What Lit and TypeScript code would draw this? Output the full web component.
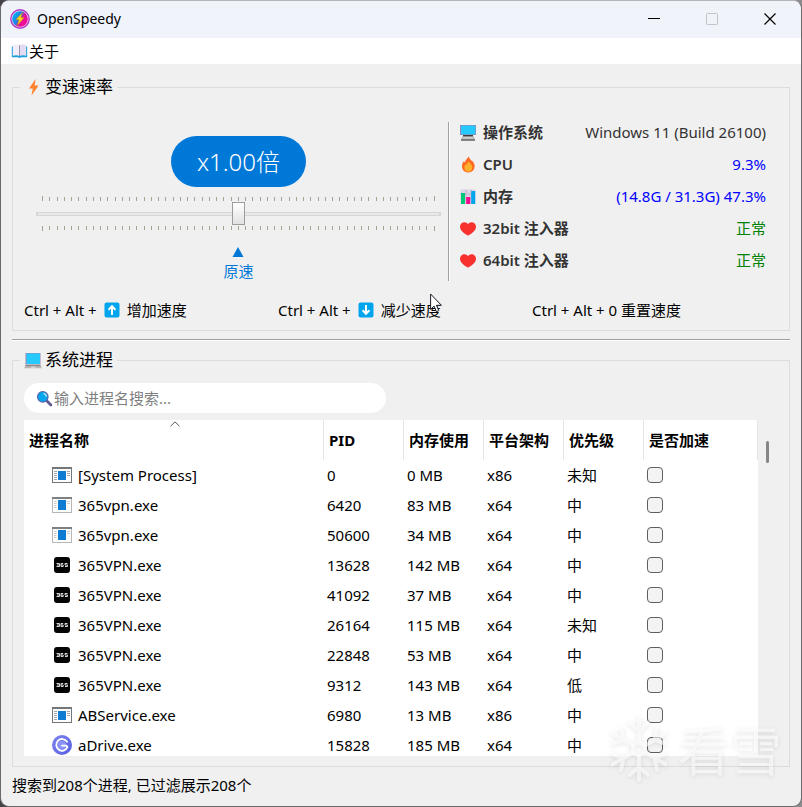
import { LitElement, html, css, svg, nothing } from "lit";
import { customElement, state } from "lit/decorators.js";

type IconKind = "system" | "user" | "vpn" | "drive";

interface Proc {
  icon: IconKind;
  name: string;
  pid: number;
  mem: string;
  arch: string;
  priority: string;
}

const PROCS: Proc[] = [
  { icon: "system", name: "[System Process]", pid: 0, mem: "0 MB", arch: "x86", priority: "未知" },
  { icon: "user", name: "365vpn.exe", pid: 6420, mem: "83 MB", arch: "x64", priority: "中" },
  { icon: "user", name: "365vpn.exe", pid: 50600, mem: "34 MB", arch: "x64", priority: "中" },
  { icon: "vpn", name: "365VPN.exe", pid: 13628, mem: "142 MB", arch: "x64", priority: "中" },
  { icon: "vpn", name: "365VPN.exe", pid: 41092, mem: "37 MB", arch: "x64", priority: "中" },
  { icon: "vpn", name: "365VPN.exe", pid: 26164, mem: "115 MB", arch: "x64", priority: "未知" },
  { icon: "vpn", name: "365VPN.exe", pid: 22848, mem: "53 MB", arch: "x64", priority: "中" },
  { icon: "vpn", name: "365VPN.exe", pid: 9312, mem: "143 MB", arch: "x64", priority: "低" },
  { icon: "system", name: "ABService.exe", pid: 6980, mem: "13 MB", arch: "x86", priority: "中" },
  { icon: "drive", name: "aDrive.exe", pid: 15828, mem: "185 MB", arch: "x64", priority: "中" },
];

const COLUMNS = ["进程名称", "PID", "内存使用", "平台架构", "优先级", "是否加速"];

const icon = (w: number, h: number, body: unknown) =>
  html`<svg width=${w} height=${h} viewBox="0 0 ${w} ${h}" aria-hidden="true">${body}</svg>`;

const appLogo = icon(20, 20, svg`
  <defs><linearGradient id="lg" x1="0" y1="0.2" x2="1" y2="0.8">
    <stop offset="0" stop-color="#00b4f5"/><stop offset="0.42" stop-color="#1a86e8"/>
    <stop offset="0.58" stop-color="#e0109c"/><stop offset="1" stop-color="#ff0a8c"/>
  </linearGradient></defs>
  <circle cx="10" cy="10" r="9.2" fill="#f3c8f0" stroke="#b03cc8" stroke-width="1.4"/>
  <circle cx="10" cy="10" r="7.8" fill="url(#lg)"/>
  <path d="M12.6 3.2 5.800 10.8h3.200L7 17l7.200-8.600h-3.300z" fill="#ffd21a" stroke="#b86a20" stroke-width=".4"/>`);

const bookIcon = icon(17, 16, svg`
  <path d="M.8 3.4h15.4v10.8H9.8l-1.3 1.1-1.3-1.1H.8z" fill="#1c9fdc"/>
  <path d="M1.8 2.2C4 .9 6.600.9 8.500 2.300v10.800c-2-1.200-4.600-1.200-6.700-.3z" fill="#f2eef9"/>
  <path d="M15.200 2.200C13 .9 10.400.9 8.500 2.300v10.800c2-1.200 4.600-1.200 6.700-.3z" fill="#e3dcf0"/>
  <path d="M8.500 2.300v11" stroke="#9a8fae" stroke-width="1"/>`);

const boltIcon = icon(18, 18, svg`<path d="M11.600 1 5 10.400h3.800L7.500 17.600l7.200-10h-4z" fill="#ff822d"/>`);

const laptopIcon = icon(18, 18, svg`
  <rect x="1.500" y="2" width="15" height="11.500" fill="#9a86b8"/>
  <rect x="2.500" y="2.500" width="13.500" height="10.500" fill="#26c9fc"/>
  <path d="M1.500 13.500h15l1.200 3.800H.3z" fill="#b9b6b4"/>
  <path d="M1.800 14h14.400l.4 1.200H1.400z" fill="#8e8a8c"/><path d="M7 15.600h4.500v1H7z" fill="#e6e6e6"/>`);

const desktopIcon = icon(18, 17, svg`
  <rect x="1" y="1" width="16" height="10" fill="#9a86b8"/>
  <rect x="2" y="1.600" width="14.400" height="8.800" fill="#26c9fc"/>
  <path d="M4 11h10v1.800H4z" fill="#3b3b3b"/><path d="M3.200 12.600h11.600l1.400 3.800H1.800z" fill="#b5b2b2"/>
  <path d="M4.400 13.300h9.200l.5 1.200H3.900z" fill="#d8d8d8"/><path d="M2 15.600h14v1H2z" fill="#3f3c3e"/>`);

const fireIcon = icon(18, 17, svg`
  <path d="M9.800.6c.5 2 1.400 2.700 2.400 3.900 1.600.5 3.600 3 3.400 6-.2 3.600-2.600 5.900-6.200 5.900s-6.300-2.300-6.400-6c0-2.500.8-4 1.900-5.200l1 1.400C6.700 3.600 8.200 2.600 9.800.6z" fill="#ff6a22"/>
  <path d="M9.400 5.800c1.800 1.500 3.900 3 3.900 6 0 2.300-1.600 4-3.900 4s-4-1.700-4-4c0-1.600.6-2.700 1.300-3.500l.9.800c.3-1.300.9-2.300 1.800-3.300z" fill="#ffb02e"/>`);

const chartIcon = icon(18, 17, svg`
  <rect x="1.500" y="1.500" width="15" height="14.500" rx="1" fill="#dcd3e6"/>
  <path d="M1.500 6h15M1.500 10.500h15M7 1.500v14M12 1.500v14" stroke="#b7aec6" stroke-width=".8"/>
  <rect x="2" y="5" width="4" height="11" fill="#00c878"/>
  <rect x="7.200" y="9" width="4" height="7" fill="#f70a8d"/>
  <rect x="12.200" y="3" width="4" height="13" fill="#00a6ed"/>`);

const heartIcon = icon(18, 17, svg`
  <path d="M5.500 2.200c1.700 0 2.900.8 3.500 2 .6-1.200 1.800-2 3.500-2 2.500 0 4.500 1.800 4.500 4.600 0 4-4.300 6.600-8 9-3.700-2.400-8-5-8-9C1 4 3 2.200 5.500 2.200z" fill="#f8312f"/>`);

const searchIcon = icon(17, 17, svg`
  <path d="M10.500 10.500l4.400 4.400" stroke="#635994" stroke-width="2.800" stroke-linecap="round"/>
  <circle cx="6.800" cy="6.800" r="5.300" fill="#00a6ed" stroke="#5a5fa8" stroke-width="1.100"/>
  <path d="M8 3.600q2 .6 2.300 2.600" stroke="#cdeefd" stroke-width="1.300" fill="none" stroke-linecap="round"/>`);

const keyIcon = (down: boolean) => icon(16, 16, svg`
  <rect x=".5" y=".5" width="15" height="15" rx="2" fill="#00a6ed"/>
  <path d=${down ? "M8 3v8M4.600 8.300 8 11.800l3.400-3.500" : "M8 13V5M4.600 7.700 8 4.200l3.400 3.500"}
    stroke="#fff" stroke-width="2" fill="none"/>`);

const windowIcon = (faded: boolean) => icon(20, 16, svg`
  <rect x=".5" y=".5" width="19" height="15" fill="#fdfdfd" stroke=${faded ? "#b4b6b8" : "#73777a"}/>
  <path d=${faded ? "M0 1h20" : "M0 1.500h20"} stroke=${faded ? "#7d8082" : "#73777a"} stroke-width=${faded ? 2 : 1}/>
  <path d=${faded
    ? "M2 4.500h2.500M2 6.500h2.500M2 8.500h2.500M2 10.500h2.500M15 4.500h3M15 6.500h3"
    : "M2 4.500h3M2 6.500h3M2 8.500h3M2 10.500h3M2 12.500h3M15 4.500h3M15 6.500h3M15 8.500h3"}
    stroke=${faded ? "#c9cbcd" : "#a0a4a8"}/>
  <rect x="6" y=${faded ? 3 : 4} width="8" height=${faded ? 10 : 9} fill="#0f7cd4"/>`);

const vpnIcon = icon(20, 16, svg`
  <rect x="2" width="16" height="16" rx="3" fill="#050505"/>
  <path d="M4.500 6.500h3v3h-3M5 8h2.500M11.200 6.500H9v3h2.200V8H9M15.500 6.500H13V8h2.500v1.500H13" stroke="#d8d8d8" stroke-width="1" fill="none"/>`);

const driveIcon = icon(20, 20, svg`
  <defs><linearGradient id="dg" x1="0" y1="0" x2="1" y2="1">
    <stop offset="0" stop-color="#7d86f0"/><stop offset="1" stop-color="#565ce0"/></linearGradient></defs>
  <circle cx="10" cy="10" r="10" fill="url(#dg)"/>
  <circle cx="10" cy="10" r="4" fill="#8b93f6"/>
  <path d="M10 10.600h4.400l1 1.600A5.800 5.800 0 1 1 15 6.800" stroke="#fff" stroke-width="1.900" fill="none" stroke-linecap="round" stroke-linejoin="round"/>`);

const PROC_ICONS: Record<IconKind, unknown> = {
  system: windowIcon(false),
  user: windowIcon(true),
  vpn: vpnIcon,
  drive: driveIcon,
};

@customElement("app-root")
export class AppRoot extends LitElement {
  @state() private query = "";

  static styles = css`
    :host {
      display: block;
      height: 100vh;
      background: linear-gradient(to right, #444448 9%, #a2a2a4 12%, #a8a8aa 97%, #8a8a8c);
      font: 15px/20px "Noto Sans", "Noto Sans CJK SC", sans-serif;
      color: #000;
    }
    * { box-sizing: border-box; }
    svg { display: block; flex: none; }
    button { border: 0; background: none; padding: 0; font: inherit; color: inherit; }
    .window {
      position: relative;
      height: 100%;
      display: flex;
      flex-direction: column;
      border: 1px solid #6a6a6c;
      border-top-color: #b4b4ba;
      border-radius: 9px;
      background: #f0f0f0;
      overflow: hidden;
    }
    .titlebar {
      flex: none;
      display: flex;
      align-items: center;
      height: 37px;
      padding: 0 2px 2px 9px;
      gap: 7px;
      background: #f0f3fa;
    }
    .title { flex: 1; font-size: 14px; }
    .controls { display: flex; height: 100%; }
    .control { width: 58px; display: grid; place-items: center; }
    .menubar {
      flex: none;
      display: flex;
      height: 26px;
      padding: 0 10px;
      background: #fff;
    }
    .menu { display: flex; align-items: center; gap: 1px; }
    .body {
      flex: 1;
      min-height: 0;
      display: flex;
      flex-direction: column;
      padding: 13px 11px 0;
    }
    fieldset { margin: 0; min-width: 0; border: 1px solid #dcdcdc; padding: 25px 11px 10px; }
    legend {
      display: flex;
      align-items: center;
      gap: 3px;
      height: 20px;
      margin-left: -4px;
      padding: 0 4px;
      font-size: 17px;
    }
    .rate { display: flex; flex-direction: column; gap: 19px; }
    .panels { display: flex; }
    .speed {
      flex: 1;
      min-width: 0;
      display: flex;
      flex-direction: column;
      align-items: center;
      padding: 14px 7px 0 12px;
    }
    .pill {
      padding: 0 26px;
      border-radius: 26px;
      background: #0078d7;
      color: #fff;
      font-size: 24px;
      line-height: 51px;
      font-weight: 300;
    }
    .ticks {
      align-self: stretch;
      display: flex;
      justify-content: space-between;
      height: 5px;
      margin: 0 6px;
    }
    .ticks.top { margin-top: 9px; align-items: flex-end; }
    .tick { width: 1px; height: 4px; background: #a3a391; }
    .tick:first-child, .tick:last-child { height: 5px; }
    .slider {
      align-self: stretch;
      appearance: none;
      height: 23px;
      margin: 1px 0;
      background: linear-gradient(#d6d6d6, #d6d6d6) center / 100% 4px no-repeat;
    }
    .slider::-webkit-slider-runnable-track {
      height: 23px;
      background: linear-gradient(#e7eaea, #e7eaea) center / 99% 2px no-repeat;
    }
    .slider::-webkit-slider-thumb {
      appearance: none;
      width: 13px;
      height: 23px;
      border: 1px solid #9c9c9c;
      background: linear-gradient(#fff, #e2e2e2);
    }
    .origin {
      display: flex;
      flex-direction: column;
      align-items: center;
      gap: 4px;
      margin-top: 16px;
      color: #0078d7;
    }
    .stats {
      width: 330px;
      margin: 0;
      padding: 0 12px 11px 10px;
      border-left: 1px solid #a0a0a0;
      box-shadow: inset 1px 0 #fff;
      display: flex;
      flex-direction: column;
      gap: 12px;
      color: #333;
    }
    .stat { display: flex; justify-content: space-between; }
    .stat dt { display: flex; align-items: center; gap: 6px; font-weight: 600; }
    .stat dd { margin: 0; }
    .blue { color: #00f; }
    .green { color: #008000; }
    .shortcuts { display: grid; grid-template-columns: repeat(3, 1fr); gap: 8px; position: relative; }
    .shortcut { display: flex; align-items: center; white-space: pre; }
    .shortcut svg { margin: 0 7px; }
    .cursor { position: absolute; left: 406px; top: -7px; }
    hr {
      flex: none;
      width: 100%;
      margin: 8px 0 9px;
      border: 0;
      border-top: 1px solid #a0a0a0;
      border-bottom: 1px solid #fff;
    }
    .procs {
      flex: 1;
      min-height: 0;
      display: flex;
      flex-direction: column;
      padding-top: 13px;
      gap: 7px;
    }
    .search {
      flex: none;
      display: flex;
      align-items: center;
      gap: 1px;
      width: 362px;
      height: 30px;
      padding: 0 12px;
      border-radius: 15px;
      background: #fff;
    }
    .search input { flex: 1; min-width: 0; border: 0; padding: 0; outline: 0; background: none; font: inherit; }
    .search input::placeholder { color: #7f7f7f; }
    .list { flex: 1; min-height: 0; display: flex; overflow: hidden; }
    .sheet { flex: 1; min-width: 0; background: #fff; overflow: hidden; }
    .track { width: 20px; padding: 21px 9px 0 8px; }
    .thumb { height: 22px; border-radius: 2px; background: #868686; }
    table { width: 100%; border-collapse: separate; border-spacing: 0; table-layout: fixed; }
    th {
      position: relative;
      width: 80px;
      height: 40px;
      padding: 0 0 0 5px;
      border-right: 1px solid #e5e5e5;
      text-align: left;
      font-weight: 700;
    }
    th:first-child { width: 300px; }
    th:last-child { width: auto; }
    td { height: 30px; padding: 0 0 0 3px; }
    .caret { position: absolute; top: 1px; left: 146px; }
    .name { display: flex; align-items: center; gap: 6px; padding-left: 25px; }
    .check {
      appearance: none;
      display: block;
      width: 16px;
      height: 16px;
      margin: 0;
      border: 1px solid #5e5e5e;
      border-radius: 4px;
      background: #f3f3f3;
    }
    .check:checked { background: #0078d7; }
    .status { flex: none; height: 39px; padding-left: 11px; line-height: 37px; }
    .watermark {
      position: absolute;
      right: 19px;
      bottom: 23px;
      display: flex;
      align-items: center;
      gap: 11px;
      pointer-events: none;
      color: rgba(255, 255, 255, 0.6);
      font: 400 52px/68px "Noto Sans CJK SC", sans-serif;
      filter: drop-shadow(0 1px 2px rgba(0, 0, 0, 0.16));
    }
  `;

  private ticks(cls: string) {
    return html`<div class="ticks ${cls}">
      ${Array.from({ length: 55 }, () => html`<span class="tick"></span>`)}
    </div>`;
  }

  private stat(ic: unknown, label: string, value: string, tone = "") {
    return html`<div class="stat"><dt>${ic}${label}</dt><dd class=${tone}>${value}</dd></div>`;
  }

  render() {
    const rows = PROCS.filter((p) => p.name.toLowerCase().includes(this.query.toLowerCase()));
    return html`<div class="window">
      <header class="titlebar">
        ${appLogo}<span class="title">OpenSpeedy</span>
        <div class="controls">
          <button class="control" aria-label="最小化">
            ${icon(12, 12, svg`<path d="M0 5.500h12" stroke="#000"/>`)}
          </button>
          <button class="control" aria-label="最大化" disabled>
            ${icon(12, 12, svg`<rect x=".5" y=".5" width="11" height="11" rx="1" fill="none" stroke="#c2c4ca"/>`)}
          </button>
          <button class="control" aria-label="关闭">
            ${icon(12, 12, svg`<path d="M.5.5l11 11M11.500.5l-11 11" stroke="#000" stroke-width="1.200"/>`)}
          </button>
        </div>
      </header>
      <nav class="menubar"><button class="menu">${bookIcon}关于</button></nav>
      <main class="body">
        <fieldset>
          <legend>${boltIcon}变速速率</legend>
          <div class="rate">
            <div class="panels">
              <div class="speed">
                <div class="pill">x1.00倍</div>
                ${this.ticks("top")}
                <input class="slider" type="range" min="-27" max="27" value="0" aria-label="变速速率" />
                ${this.ticks("")}
                <div class="origin">
                  ${icon(12, 10, svg`<path d="M6 0l5.500 10H.5z" fill="#0078d7"/>`)}<span>原速</span>
                </div>
              </div>
              <dl class="stats">
                ${this.stat(desktopIcon, "操作系统", "Windows 11 (Build 26100)")}
                ${this.stat(fireIcon, "CPU", "9.3%", "blue")}
                ${this.stat(chartIcon, "内存", "(14.8G / 31.3G) 47.3%", "blue")}
                ${this.stat(heartIcon, "32bit 注入器", "正常", "green")}
                ${this.stat(heartIcon, "64bit 注入器", "正常", "green")}
              </dl>
            </div>
            <div class="shortcuts">
              <div class="shortcut">Ctrl + Alt +${keyIcon(false)}增加速度</div>
              <div class="shortcut">Ctrl + Alt +${keyIcon(true)}减少速度</div>
              <div class="shortcut">Ctrl + Alt + 0 重置速度</div>
              <svg class="cursor" width="13" height="20" viewBox="0 0 13 20" aria-hidden="true">
                <path d="M.6 1v15.400l3.500-3.300 2.300 5.600 2.400-1-2.300-5.400h4.900z" fill="#fff" stroke="#1c1c28"/>
              </svg>
            </div>
          </div>
        </fieldset>
        <hr />
        <fieldset class="procs">
          <legend>${laptopIcon}系统进程</legend>
          <label class="search">
            ${searchIcon}
            <input type="text" placeholder="输入进程名搜索..." aria-label="输入进程名搜索"
              @input=${(e: InputEvent) => (this.query = (e.target as HTMLInputElement).value)} />
          </label>
          <div class="list">
            <div class="sheet">
              <table>
                <thead><tr>${COLUMNS.map((c, i) => html`<th scope="col">${i === 0
                  ? html`<svg class="caret" width="10" height="6" viewBox="0 0 10 6" aria-hidden="true">
                      <path d="M.5 5.200 5 .9l4.500 4.300" fill="none" stroke="#5c5c5c"/></svg>`
                  : nothing}${c}</th>`)}</tr></thead>
                <tbody>${rows.map((p) => html`<tr>
                  <td><div class="name">${PROC_ICONS[p.icon]}${p.name}</div></td>
                  <td>${p.pid}</td><td>${p.mem}</td><td>${p.arch}</td><td>${p.priority}</td>
                  <td><input class="check" type="checkbox" aria-label="加速 ${p.name} ${p.pid}" /></td>
                </tr>`)}</tbody>
              </table>
            </div>
            <div class="track"><div class="thumb"></div></div>
          </div>
        </fieldset>
      </main>
      <footer class="status">搜索到208个进程, 已过滤展示208个</footer>
      <div class="watermark">
        <svg width="56" height="68" viewBox="-28 -34 56 68" fill="none" stroke="rgba(255,255,255,.6)"
          stroke-width="4" stroke-linecap="round" aria-hidden="true">
          <circle r="6"/>
          ${[0, 60, 120, 180, 240, 300].map((a) => svg`
            <path transform="rotate(${a})" d="M0-8V-31M-9-26 0-18 9-26"/>`)}
        </svg>
        <span>看雪</span>
      </div>
    </div>`;
  }
}
